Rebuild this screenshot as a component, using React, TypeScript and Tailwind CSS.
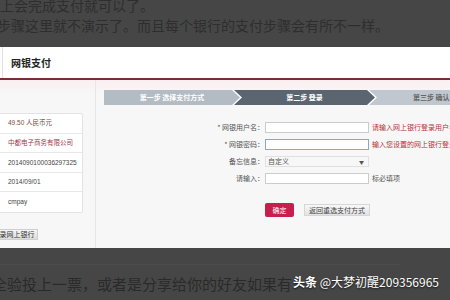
import React from 'react';

const cjk = { fontFamily: '"Noto Sans CJK SC", "Liberation Sans", sans-serif' };

const rows = [
  { text: '49.50 人民币元', color: 'text-[#7d4a3e]' },
  { text: '中都电子商务有限公司', color: 'text-[#9c3a4c]' },
  { text: '2014090100036297325', color: 'text-[#444]' },
  { text: '2014/09/01', color: 'text-[#444]' },
  { text: 'cmpay', color: 'text-[#444]' },
];

function FormRow({ label, children, hint, hintColor }: { label: string; children: React.ReactNode; hint?: string; hintColor?: string }) {
  return (
    <div className="flex items-center h-[17px]">
      <div className="w-[168px] text-right text-[7px] text-[#555] whitespace-nowrap">{label}</div>
      <div className="ml-[1px] w-[104px]">{children}</div>
      {hint && <div className={`ml-[3px] text-[7px] whitespace-nowrap ${hintColor}`}>{hint}</div>}
    </div>
  );
}

function Steps() {
  return (
    <div className="flex h-[15px] w-[420px] bg-white text-[7px] font-bold">
      <div className="w-[136px] shrink-0 bg-[#b3bbc3] text-white flex items-center justify-center [clip-path:polygon(0_0,128px_0,136px_50%,128px_100%,0_100%)]">
        第一步 选择支付方式
      </div>
      <div className="ml-[-6px] w-[141px] shrink-0 bg-[#5b6570] text-white flex items-center justify-center [clip-path:polygon(0_0,133px_0,141px_50%,133px_100%,0_100%,8px_50%)]">
        第二步 登录
      </div>
      <div className="ml-[-6px] flex-1 bg-[#c0c7ce] text-[#666] flex items-center pl-[44px] [clip-path:polygon(0_0,100%_0,100%_100%,0_100%,8px_50%)]">
        第三步 确认
      </div>
    </div>
  );
}

export default function App() {
  return (
    <div className="w-[450px] h-[300px] overflow-hidden bg-[#464646] flex flex-col relative" style={cjk}>
      <div className="h-[47px] shrink-0 text-[14px] leading-[20px] text-[#2e2e2e] whitespace-nowrap">
        <div className="mt-[-5px]">上会完成支付就可以了。</div>
        <div className="ml-[-3px]">步骤这里就不演示了。而且每个银行的支付步骤会有所不一样。</div>
      </div>

      <div className="h-[201px] shrink-0 flex flex-col bg-white">
        <div className="h-[33px] shrink-0 flex items-center border-b-2 border-[#7a2d35]">
          <div className="ml-[2px] w-px h-full bg-[#e2e2e2]" />
          <div className="ml-[8px] text-[10px] font-bold text-[#222]">网银支付</div>
        </div>
        <div className="flex-1 flex bg-[linear-gradient(#fbeff0,#f7f7f7_14px)]">
          <div className="w-[96px] shrink-0 border-r border-[#e6e6e6] pt-[33px]">
            <div className="ml-[-3px] w-[86px] bg-white border border-[#e3e3e3] rounded-[2px]">
              {rows.map((r, i) => (
                <div
                  key={i}
                  className={`h-[19.6px] flex items-center pl-[10px] text-[6.5px] whitespace-nowrap ${r.color} ${i < rows.length - 1 ? 'border-b border-[#e8e8e8]' : ''}`}
                  style={{ fontFamily: '"Liberation Sans", "Noto Sans CJK SC", sans-serif' }}
                >
                  {r.text}
                </div>
              ))}
            </div>
            <div className="mt-[16px] ml-[-11px] w-[49px] h-[11px] flex items-center justify-center text-[7px] text-[#333] border border-[#cfcfcf] bg-[linear-gradient(#f5f5f5,#dcdcdc)] whitespace-nowrap">
              登录网上银行
            </div>
          </div>

          <div className="flex-1 pl-[8px] pt-[10px]">
            <Steps />
            <div className="mt-[14px] ml-[-8px]">
              <FormRow label="* 网银用户名：" hint="请输入网上银行登录用户名" hintColor="text-[#b8323a]">
                <div className="h-[11px] bg-white border border-[#cccccc]" />
              </FormRow>
              <FormRow label="* 网银密码：" hint="输入您设置的网上银行登录密码" hintColor="text-[#b8323a]">
                <div className="h-[11px] bg-white border border-[#8fa6bd]" />
              </FormRow>
              <FormRow label="备忘信息：">
                <div className="h-[11px] flex items-center justify-between px-[2px] text-[7px] text-[#555] border border-[#e0e0e0] bg-[#f7f7f7]">
                  <span>自定义</span>
                  <span className="text-[5px] text-[#555] mr-[2px]">▼</span>
                </div>
              </FormRow>
              <FormRow label="请输入：" hint="标必填项" hintColor="text-[#555]">
                <div className="h-[11px] bg-white border border-[#cccccc]" />
              </FormRow>
              <div className="flex items-center mt-[16px] pl-[169px]">
                <div className="w-[29px] h-[14px] rounded-[2px] bg-[#c81e4e] text-white text-[7px] flex items-center justify-center">确定</div>
                <div className="ml-[10px] w-[66px] h-[12px] border border-[#d6d6d6] bg-[linear-gradient(#f8f8f8,#e2e2e2)] text-[7px] text-[#444] flex items-center justify-center">返回重选支付方式</div>
              </div>
            </div>
          </div>
        </div>
      </div>

      <div className="flex-1 flex flex-col">
        <div className="mt-[16px] w-[400px] h-px bg-[#4d4d4d]" />
        <div className="mt-[9px] ml-[-8px] text-[15px] leading-[20px] text-[#2a2a2a] whitespace-nowrap">
          全验投上一票，或者是分享给你的好友如果有
        </div>
      </div>

      <div className="absolute left-[293px] top-[274px] text-[12px] leading-[16px] text-white whitespace-nowrap [text-shadow:0_1px_2px_rgba(0,0,0,0.7)]">
        <span className="font-bold">头条</span> @大梦初醒209356965
      </div>
    </div>
  );
}
